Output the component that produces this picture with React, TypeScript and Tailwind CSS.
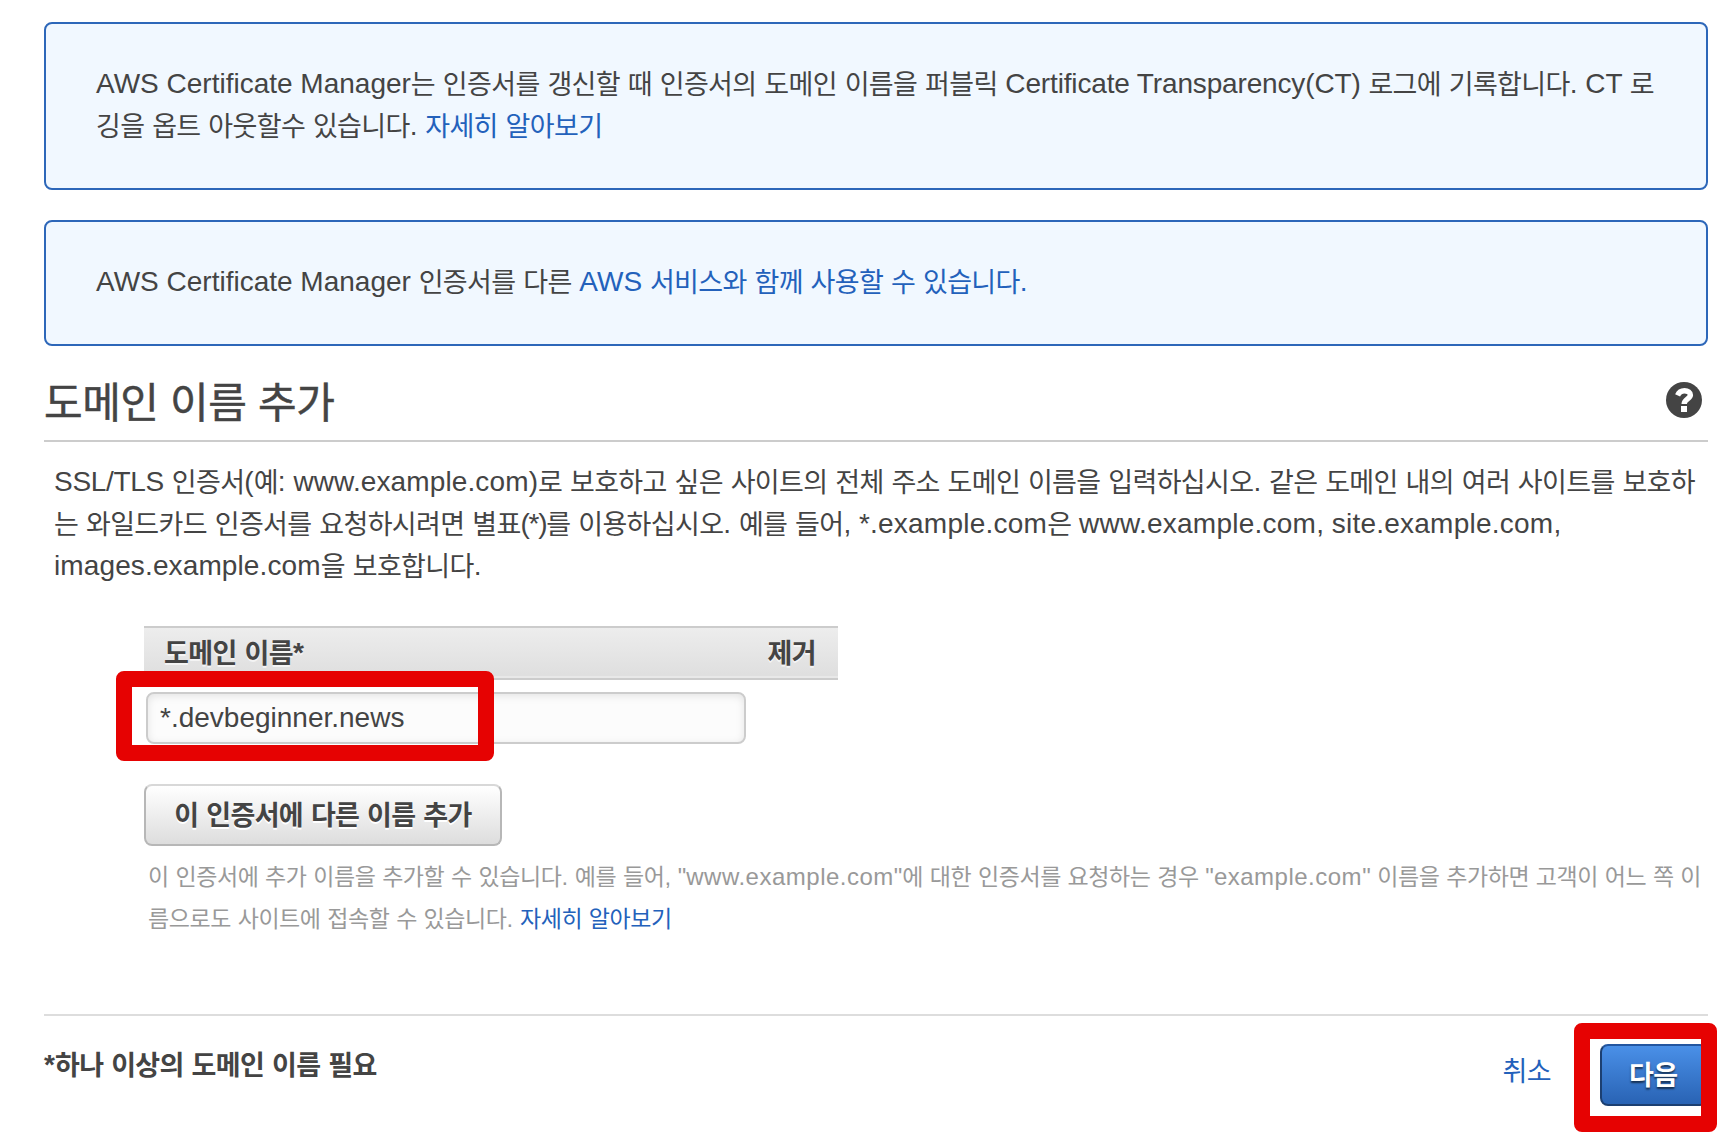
import type { ReactNode } from "react";

const FONT = "font-['Liberation_Sans','Noto_Sans_CJK_KR',sans-serif]";

const BODY = "relative top-px text-[27px] leading-none tracking-[-0.65px]";
const BOLD = "relative top-px text-[27px] leading-none tracking-[-0.62px]";
const TITLE = "tracking-[-0.5px]";
const HELP = "text-[23px] leading-none tracking-[-0.42px]";

/* Gives the Hangul runs and the host names in a text their own spacing. */
function T({ children, k = BODY, host = "tracking-[0.12px]" }: { children: string; k?: string; host?: string }) {
  return (
    <>
      {children.split(/([\uAC00-\uD7A3]+|[\w.]+\.com)/).map((part, i) =>
        i % 2 ? (
          <span key={i} className={part.endsWith(".com") ? host : k}>
            {part}
          </span>
        ) : (
          part
        ),
      )}
    </>
  );
}

function Line({ children }: { children: ReactNode }) {
  return <span className="block whitespace-nowrap">{children}</span>;
}

function Help({ children }: { children: string }) {
  return (
    <T k={HELP} host="tracking-[0.5px]">
      {children}
    </T>
  );
}

export default function App() {
  return (
    <div
      className={`${FONT} h-[1135px] w-[1722px] overflow-hidden bg-white pt-[22px] pr-[14px] pl-[44px] text-[28px] leading-[42px] text-[#444444]`}
    >
      <section className="h-[168px] rounded-[8px] border-2 border-[#2d67b9] bg-[#f1f8ff] pt-[39px] pl-[50px]">
        <Line>
          <T>AWS Certificate Manager는 인증서를 갱신할 때 인증서의 도메인 이름을 퍼블릭 </T>
          <span className="tracking-[-0.15px]">Certificate Transparency(CT)</span>
          <T> 로그에 기록합니다. CT 로</T>
        </Line>
        <Line>
          <T>깅을 옵트 아웃할수 있습니다. </T>
          <a className="text-[#2361bb]">
            <T>자세히 알아보기</T>
          </a>
        </Line>
      </section>
      <section className="mt-[30px] h-[126px] rounded-[8px] border-2 border-[#2d67b9] bg-[#f1f8ff] pt-[39px] pl-[50px]">
        <Line>
          <T>AWS Certificate Manager 인증서를 다른 </T>
          <a className="text-[#2361bb]">
            <T>AWS 서비스와 함께 사용할 수 있습니다.</T>
          </a>
        </Line>
      </section>

      <header className="flex h-[96px] items-start justify-between border-b-2 border-[#cccccc] pt-[34px] pr-[6px]">
        <h1 className="text-[42px] leading-[48px] [-webkit-text-stroke:0.5px_#444444]">
          <Line>
            <T k={TITLE}>도메인 이름 추가</T>
          </Line>
        </h1>
        <svg className="mt-[2px] h-9 w-9" viewBox="0 0 36 36">
          <circle cx="18" cy="18" r="18" fill="#444444" />
          <path
            d="M11.6 13.4C12.900 10.300 15 8.800 18.500 8.800c3.500 0 5.900 1.500 5.900 4.300 0 3.700-6.200 4-6.200 8.900"
            fill="none"
            stroke="#ffffff"
            strokeWidth="5.400"
          />
          <path d="M15 24h6v6h-6z" fill="#ffffff" />
        </svg>
      </header>

      <div className="mt-[19px] pl-[10px]">
        <Line>
          <span className="tracking-[-0.3px]">SSL/TLS</span>
          <T> 인증서(예: www.example.com)로 보호하고 싶은 사이트의 전체 주소 도메인 이름을 입력하십시오. 같은 도메인 내의 여러 사이트를 보호하</T>
        </Line>
        <Line>
          <T>는 와일드카드 인증서를 요청하시려면 별표</T>
          <span className="tracking-[-1.3px]">(*)</span>
          <T host="tracking-[0.24px]">를 이용하십시오. 예를 들어, *.example.com은 www.example.com, site.example.com,</T>
        </Line>
        <Line>
          <T>images.example.com을 보호합니다.</T>
        </Line>
      </div>

      <main className="mt-[39px] h-[388px] pl-[100px]">
        <div className="flex h-[54px] w-[694px] items-center justify-between border-y-2 border-[#cccccc] bg-linear-to-b from-[#ededed] to-[#dedede] pr-[22px] pl-[20px] font-bold shadow-[inset_0_-2px_0_#e8e8e8] [text-shadow:0_2px_0_#f4f4f4]">
          <Line>
            <T k={BOLD}>도메인 이름*</T>
          </Line>
          <Line>
            <T k={BOLD}>제거</T>
          </Line>
        </div>
        <div className="relative mt-[12px] ml-[2px] h-[52px] w-[600px]">
          <div className="h-[52px] w-[600px] rounded-[8px] border-2 border-[#cccccc] bg-[#fcfcfc] pt-[3px] pl-[12px] shadow-[inset_0_2px_8px_rgba(0,0,0,0.1)]">
            <Line>*.devbeginner.news</Line>
          </div>
          <div className="absolute -top-[21px] -left-[30px] h-[90px] w-[378px] rounded-[8px] border-16 border-[#e60202]" />
        </div>
        <button className="mt-[40px] flex h-[62px] w-[358px] items-center justify-center rounded-[8px] border-2 border-[#b7b7b7] border-t-[#d8d8d8] bg-linear-to-b from-white to-[#dddddd] font-bold [text-shadow:0_2px_0_#ffffff]">
          <Line>
            <T k={BOLD}>이 인증서에 다른 이름 추가</T>
          </Line>
        </button>
        <div className="mt-[10px] pl-[4px] text-[24px] leading-[42px] text-[#999999]">
          <Line>
            <Help>이 인증서에 추가 이름을 추가할 수 있습니다. 예를 들어, "www.example.com"에 대한 인증서를 요청하는 경우 "example.com" 이름을 추가하면 고객이 어느 쪽 이</Help>
          </Line>
          <Line>
            <Help>름으로도 사이트에 접속할 수 있습니다. </Help>
            <a className="text-[#2361bb]">
              <Help>자세히 알아보기</Help>
            </a>
          </Line>
        </div>
      </main>

      <footer className="flex justify-between border-t-2 border-[#dddddd]">
        <p className="mt-[28px] font-bold">
          <Line>
            <T k={BOLD}>*하나 이상의 도메인 이름 필요</T>
          </Line>
        </p>
        <div className="flex">
          <a className="mt-[34px] mr-[49px] text-[#2361bb]">
            <Line>
              <T>취소</T>
            </Line>
          </a>
          <div className="relative mt-[28px] h-[62px] w-[108px]">
            <button className="flex h-[62px] w-[108px] items-center rounded-[8px] border-2 border-[#1c3f71] border-t-[#2356a0] bg-linear-to-b from-[#4a90e8] to-[#2963b4] pl-[27px] font-bold text-white [text-shadow:0_2px_2px_rgba(0,0,0,0.6)]">
              <Line>
                <T k={BOLD}>다음</T>
              </Line>
            </button>
            <div className="absolute -top-[21px] -left-[26px] h-[109px] w-[143px] rounded-[8px] border-16 border-[#e60202]" />
          </div>
        </div>
      </footer>
    </div>
  );
}
